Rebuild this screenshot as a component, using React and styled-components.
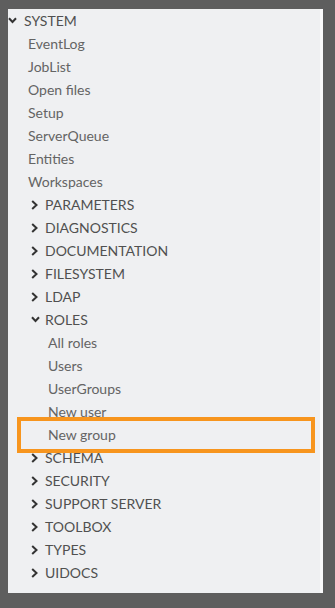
import styled, { createGlobalStyle } from "styled-components";

const GlobalStyle = createGlobalStyle`
  html, body {
    margin: 0;
    padding: 0;
    background: #5e5e5e;
  }
  body {
    font-family: Lato, "Open Sans", sans-serif;
  }
`;

const Page = styled.div`
  padding: 9px 12px 15px 8px;
`;

const Panel = styled.nav`
  background: #eff0f2;
  border-right: 3px solid #f9f9fa;
  height: 584px;
  box-sizing: border-box;
`;

const List = styled.ul`
  list-style: none;
  margin: 0;
  padding: 0;
`;

const Row = styled.li`
  position: relative;
  display: flex;
  align-items: center;
  height: 23px;
  padding-left: ${({ $indent }) => $indent}px;
  font-size: 14px;
  white-space: nowrap;
`;

const Caret = styled.span`
  display: inline-flex;
  width: ${({ $w }) => $w}px;
  justify-content: flex-start;
  align-items: center;
`;

const Label = styled.span`
  color: ${({ $caps }) => ($caps ? "#505050" : "#646464")};
`;

const Highlight = styled.span`
  position: absolute;
  left: 9px;
  top: -6px;
  width: 298px;
  height: 36px;
  border: 4px solid #f7951e;
  box-sizing: border-box;
  pointer-events: none;
`;

const ChevronRight = () => (
  <svg width="7" height="10" viewBox="0 0 7 10">
    <path d="M1.2 1 L5.5 5 L1.2 9" fill="none" stroke="#333" strokeWidth="2" />
  </svg>
);

const ChevronDown = () => (
  <svg width="9" height="7" viewBox="0 0 9 7">
    <path d="M1 1.2 L4.5 5 L8 1.2" fill="none" stroke="#333" strokeWidth="2" />
  </svg>
);

const Branch = ({ label, indent, open, caret = 14 }) => (
  <Row $indent={indent}>
    <Caret $w={caret}>{open ? <ChevronDown /> : <ChevronRight />}</Caret>
    <Label $caps>{label}</Label>
  </Row>
);

const Leaf = ({ label, indent, active }) => (
  <Row $indent={indent}>
    <Label>{label}</Label>
    {active && <Highlight />}
  </Row>
);

const systemItems = ["EventLog", "JobList", "Open files", "Setup", "ServerQueue", "Entities", "Workspaces"];
const beforeRoles = ["PARAMETERS", "DIAGNOSTICS", "DOCUMENTATION", "FILESYSTEM", "LDAP"];
const roleItems = ["All roles", "Users", "UserGroups", "New user", "New group"];
const afterRoles = ["SCHEMA", "SECURITY", "SUPPORT SERVER", "TOOLBOX", "TYPES", "UIDOCS"];

export default function App() {
  return (
    <>
      <GlobalStyle />
      <Page>
        <Panel>
          <List>
            <Branch label="SYSTEM" indent={0} caret={16} open />
            {systemItems.map((s) => (
              <Leaf key={s} label={s} indent={20} />
            ))}
            {beforeRoles.map((s) => (
              <Branch key={s} label={s} indent={23} />
            ))}
            <Branch label="ROLES" indent={23} open />
            {roleItems.map((s) => (
              <Leaf key={s} label={s} indent={40} active={s === "New group"} />
            ))}
            {afterRoles.map((s) => (
              <Branch key={s} label={s} indent={23} />
            ))}
          </List>
        </Panel>
      </Page>
    </>
  );
}
